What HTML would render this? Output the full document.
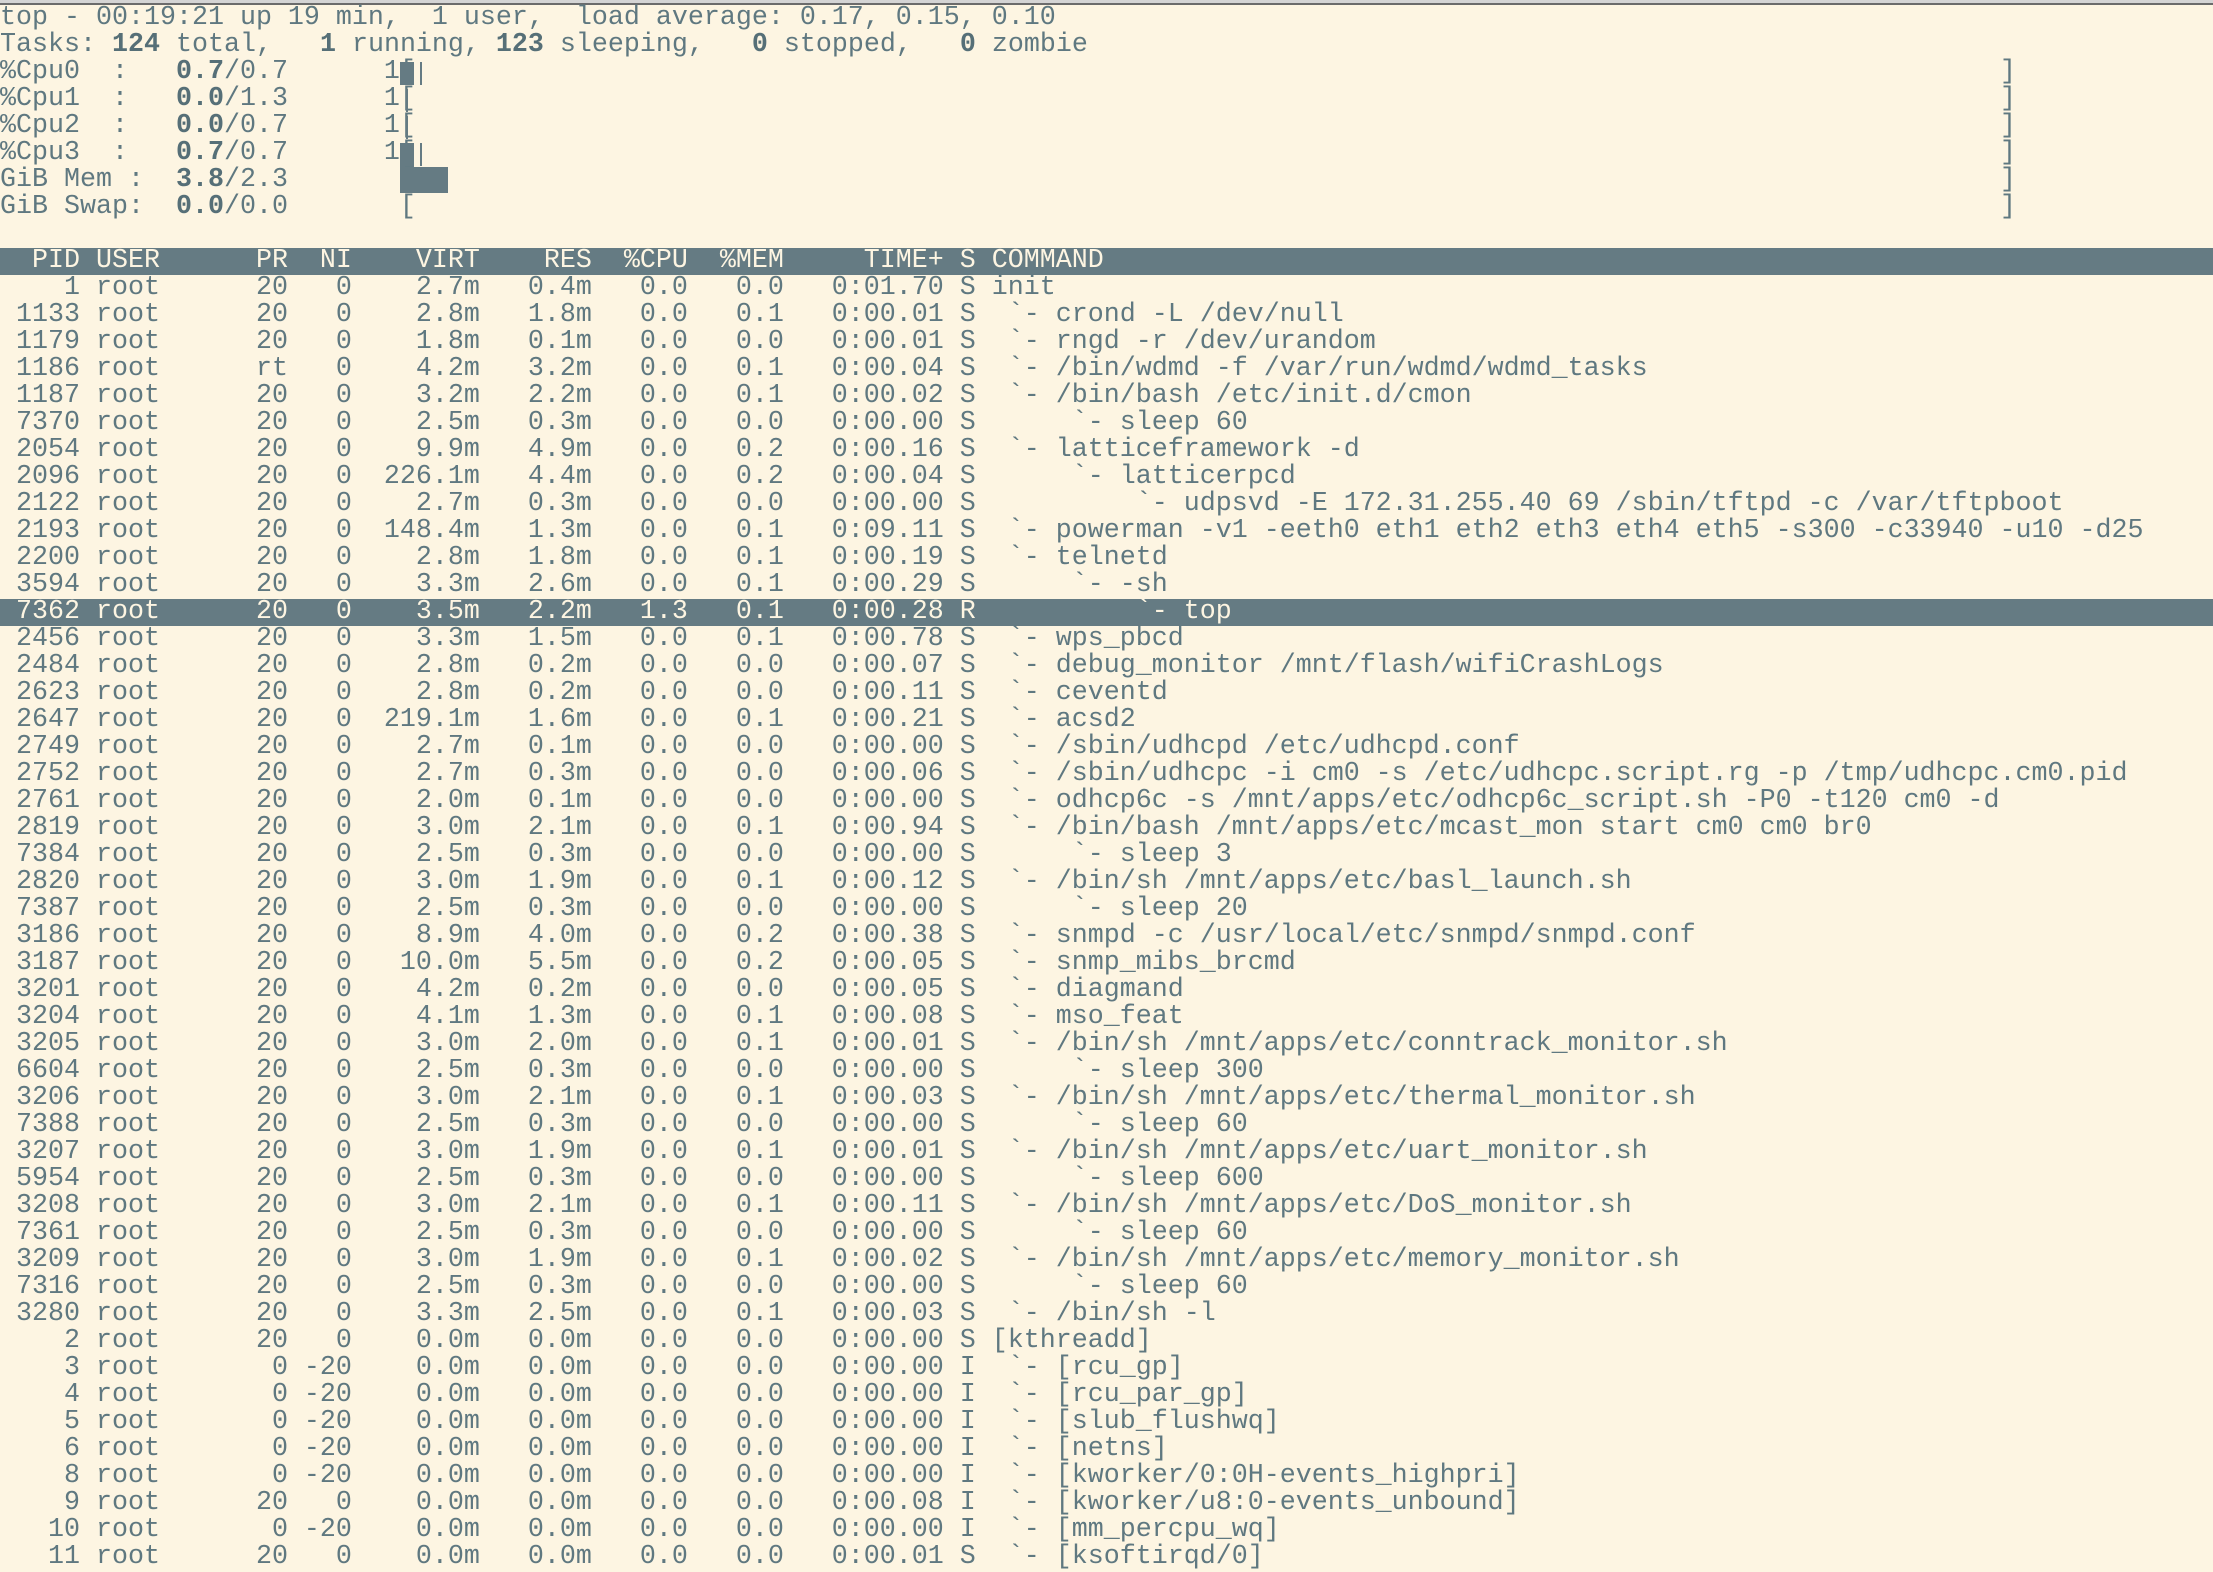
<!DOCTYPE html>
<html><head><meta charset="utf-8"><style>
html,body{margin:0;padding:0;}
body{width:2213px;height:1554px;overflow:hidden;background:#fdf5e2;position:relative;font-family:"Liberation Mono",monospace;font-size:26.667px;color:#5f7880;}
.tb1{position:absolute;left:0;top:0;width:2213px;height:3px;background:#d4d4d4;}
.tb2{position:absolute;left:0;top:3px;width:2213px;height:2px;background:#6b6b6b;}
.scr{position:absolute;left:0;top:5px;width:2213px;}
.l{height:27px;line-height:27px;white-space:pre;position:relative;}
.bar{background:#657b83;color:#fdf5e2;}
b{font-weight:bold;color:#566f77;}
.blk{position:absolute;background:#657b83;}
.rb{position:absolute;left:2000px;top:0;}
</style></head><body>
<div class="tb1"></div><div class="tb2"></div>
<div class="scr">
<div class="l">top - 00:19:21 up 19 min,  1 user,  load average: 0.17, 0.15, 0.10</div>
<div class="l">Tasks: <b>124</b> total,   <b>1</b> running, <b>123</b> sleeping,   <b>0</b> stopped,   <b>0</b> zombie</div>
<div class="l">%Cpu0  :   <b>0.7</b>/0.7      1[<div class="blk" style="left:400px;top:3px;width:14px;height:23px"></div><div class="blk" style="left:420px;top:3px;width:2px;height:23px"></div><span class="rb">]</span></div>
<div class="l">%Cpu1  :   <b>0.0</b>/1.3      1[<div class="blk" style="left:406px;top:3px;width:2px;height:23px"></div><span class="rb">]</span></div>
<div class="l">%Cpu2  :   <b>0.0</b>/0.7      1[<div class="blk" style="left:406px;top:3px;width:2px;height:23px"></div><span class="rb">]</span></div>
<div class="l">%Cpu3  :   <b>0.7</b>/0.7      1[<div class="blk" style="left:400px;top:3px;width:14px;height:24px"></div><div class="blk" style="left:420px;top:3px;width:2px;height:23px"></div><span class="rb">]</span></div>
<div class="l">GiB Mem :  <b>3.8</b>/2.3       [<div class="blk" style="left:400px;top:0px;width:48px;height:26px"></div><span class="rb">]</span></div>
<div class="l">GiB Swap:  <b>0.0</b>/0.0       [<span class="rb">]</span></div>
<div class="l"> </div>
<div class="l bar">  PID USER      PR  NI    VIRT    RES  %CPU  %MEM     TIME+ S COMMAND</div>
<div class="l">    1 root      20   0    2.7m   0.4m   0.0   0.0   0:01.70 S init</div>
<div class="l"> 1133 root      20   0    2.8m   1.8m   0.0   0.1   0:00.01 S  `- crond -L /dev/null</div>
<div class="l"> 1179 root      20   0    1.8m   0.1m   0.0   0.0   0:00.01 S  `- rngd -r /dev/urandom</div>
<div class="l"> 1186 root      rt   0    4.2m   3.2m   0.0   0.1   0:00.04 S  `- /bin/wdmd -f /var/run/wdmd/wdmd_tasks</div>
<div class="l"> 1187 root      20   0    3.2m   2.2m   0.0   0.1   0:00.02 S  `- /bin/bash /etc/init.d/cmon</div>
<div class="l"> 7370 root      20   0    2.5m   0.3m   0.0   0.0   0:00.00 S      `- sleep 60</div>
<div class="l"> 2054 root      20   0    9.9m   4.9m   0.0   0.2   0:00.16 S  `- latticeframework -d</div>
<div class="l"> 2096 root      20   0  226.1m   4.4m   0.0   0.2   0:00.04 S      `- latticerpcd</div>
<div class="l"> 2122 root      20   0    2.7m   0.3m   0.0   0.0   0:00.00 S          `- udpsvd -E 172.31.255.40 69 /sbin/tftpd -c /var/tftpboot</div>
<div class="l"> 2193 root      20   0  148.4m   1.3m   0.0   0.1   0:09.11 S  `- powerman -v1 -eeth0 eth1 eth2 eth3 eth4 eth5 -s300 -c33940 -u10 -d25</div>
<div class="l"> 2200 root      20   0    2.8m   1.8m   0.0   0.1   0:00.19 S  `- telnetd</div>
<div class="l"> 3594 root      20   0    3.3m   2.6m   0.0   0.1   0:00.29 S      `- -sh</div>
<div class="l bar"> 7362 root      20   0    3.5m   2.2m   1.3   0.1   0:00.28 R          `- top</div>
<div class="l"> 2456 root      20   0    3.3m   1.5m   0.0   0.1   0:00.78 S  `- wps_pbcd</div>
<div class="l"> 2484 root      20   0    2.8m   0.2m   0.0   0.0   0:00.07 S  `- debug_monitor /mnt/flash/wifiCrashLogs</div>
<div class="l"> 2623 root      20   0    2.8m   0.2m   0.0   0.0   0:00.11 S  `- ceventd</div>
<div class="l"> 2647 root      20   0  219.1m   1.6m   0.0   0.1   0:00.21 S  `- acsd2</div>
<div class="l"> 2749 root      20   0    2.7m   0.1m   0.0   0.0   0:00.00 S  `- /sbin/udhcpd /etc/udhcpd.conf</div>
<div class="l"> 2752 root      20   0    2.7m   0.3m   0.0   0.0   0:00.06 S  `- /sbin/udhcpc -i cm0 -s /etc/udhcpc.script.rg -p /tmp/udhcpc.cm0.pid</div>
<div class="l"> 2761 root      20   0    2.0m   0.1m   0.0   0.0   0:00.00 S  `- odhcp6c -s /mnt/apps/etc/odhcp6c_script.sh -P0 -t120 cm0 -d</div>
<div class="l"> 2819 root      20   0    3.0m   2.1m   0.0   0.1   0:00.94 S  `- /bin/bash /mnt/apps/etc/mcast_mon start cm0 cm0 br0</div>
<div class="l"> 7384 root      20   0    2.5m   0.3m   0.0   0.0   0:00.00 S      `- sleep 3</div>
<div class="l"> 2820 root      20   0    3.0m   1.9m   0.0   0.1   0:00.12 S  `- /bin/sh /mnt/apps/etc/basl_launch.sh</div>
<div class="l"> 7387 root      20   0    2.5m   0.3m   0.0   0.0   0:00.00 S      `- sleep 20</div>
<div class="l"> 3186 root      20   0    8.9m   4.0m   0.0   0.2   0:00.38 S  `- snmpd -c /usr/local/etc/snmpd/snmpd.conf</div>
<div class="l"> 3187 root      20   0   10.0m   5.5m   0.0   0.2   0:00.05 S  `- snmp_mibs_brcmd</div>
<div class="l"> 3201 root      20   0    4.2m   0.2m   0.0   0.0   0:00.05 S  `- diagmand</div>
<div class="l"> 3204 root      20   0    4.1m   1.3m   0.0   0.1   0:00.08 S  `- mso_feat</div>
<div class="l"> 3205 root      20   0    3.0m   2.0m   0.0   0.1   0:00.01 S  `- /bin/sh /mnt/apps/etc/conntrack_monitor.sh</div>
<div class="l"> 6604 root      20   0    2.5m   0.3m   0.0   0.0   0:00.00 S      `- sleep 300</div>
<div class="l"> 3206 root      20   0    3.0m   2.1m   0.0   0.1   0:00.03 S  `- /bin/sh /mnt/apps/etc/thermal_monitor.sh</div>
<div class="l"> 7388 root      20   0    2.5m   0.3m   0.0   0.0   0:00.00 S      `- sleep 60</div>
<div class="l"> 3207 root      20   0    3.0m   1.9m   0.0   0.1   0:00.01 S  `- /bin/sh /mnt/apps/etc/uart_monitor.sh</div>
<div class="l"> 5954 root      20   0    2.5m   0.3m   0.0   0.0   0:00.00 S      `- sleep 600</div>
<div class="l"> 3208 root      20   0    3.0m   2.1m   0.0   0.1   0:00.11 S  `- /bin/sh /mnt/apps/etc/DoS_monitor.sh</div>
<div class="l"> 7361 root      20   0    2.5m   0.3m   0.0   0.0   0:00.00 S      `- sleep 60</div>
<div class="l"> 3209 root      20   0    3.0m   1.9m   0.0   0.1   0:00.02 S  `- /bin/sh /mnt/apps/etc/memory_monitor.sh</div>
<div class="l"> 7316 root      20   0    2.5m   0.3m   0.0   0.0   0:00.00 S      `- sleep 60</div>
<div class="l"> 3280 root      20   0    3.3m   2.5m   0.0   0.1   0:00.03 S  `- /bin/sh -l</div>
<div class="l">    2 root      20   0    0.0m   0.0m   0.0   0.0   0:00.00 S [kthreadd]</div>
<div class="l">    3 root       0 -20    0.0m   0.0m   0.0   0.0   0:00.00 I  `- [rcu_gp]</div>
<div class="l">    4 root       0 -20    0.0m   0.0m   0.0   0.0   0:00.00 I  `- [rcu_par_gp]</div>
<div class="l">    5 root       0 -20    0.0m   0.0m   0.0   0.0   0:00.00 I  `- [slub_flushwq]</div>
<div class="l">    6 root       0 -20    0.0m   0.0m   0.0   0.0   0:00.00 I  `- [netns]</div>
<div class="l">    8 root       0 -20    0.0m   0.0m   0.0   0.0   0:00.00 I  `- [kworker/0:0H-events_highpri]</div>
<div class="l">    9 root      20   0    0.0m   0.0m   0.0   0.0   0:00.08 I  `- [kworker/u8:0-events_unbound]</div>
<div class="l">   10 root       0 -20    0.0m   0.0m   0.0   0.0   0:00.00 I  `- [mm_percpu_wq]</div>
<div class="l">   11 root      20   0    0.0m   0.0m   0.0   0.0   0:00.01 S  `- [ksoftirqd/0]</div>
</div>
</body></html>
